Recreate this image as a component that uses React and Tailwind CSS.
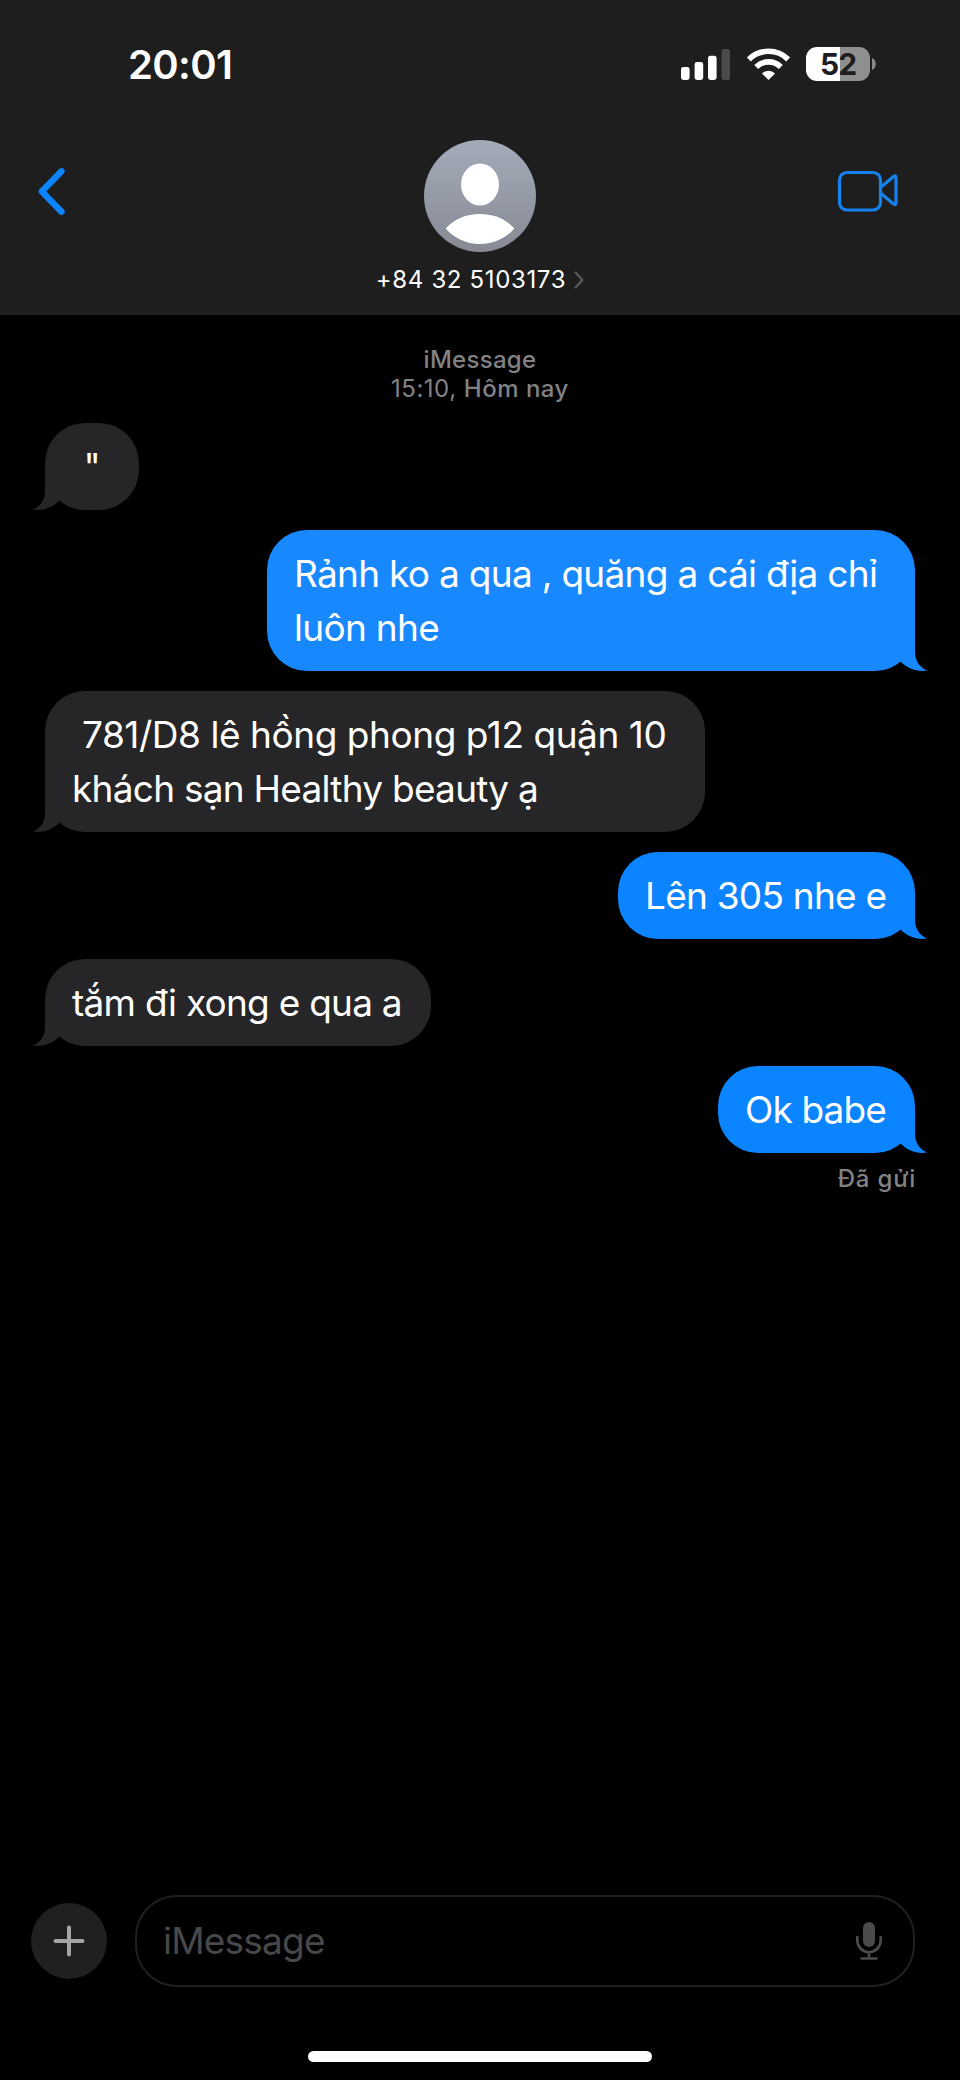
const messages = [
  { id: 1, lines: [{ text: '"' }], width: 'w-[94px]', center: true },
  {
    id: 2,
    mine: true,
    lines: [
      { text: 'Rảnh ko a qua , quăng a cái địa chỉ', tracking: 'tracking-[-0.7px]' },
      { text: 'luôn nhe', tracking: 'tracking-[-0.7px]' },
    ],
    width: 'w-[648px]',
    color: 'bg-[#1888ff]',
    fill: '#1888ff',
  },
  {
    id: 3,
    lines: [
      { text: ' 781/D8 lê hồng phong p12 quận 10', tracking: 'tracking-[-0.45px]' },
      { text: 'khách sạn Healthy beauty ạ', tracking: 'tracking-[-0.74px]' },
    ],
    width: 'w-[660px]',
  },
  { id: 4, mine: true, lines: [{ text: 'Lên 305 nhe e', tracking: 'tracking-[-0.75px]' }], width: 'w-[297px]', color: 'bg-[#0c84ff]', fill: '#0c84ff' },
  { id: 5, lines: [{ text: 'tắm đi xong e qua a', tracking: 'tracking-[-0.75px]' }], width: 'w-[386px]' },
  { id: 6, mine: true, lines: [{ text: 'Ok babe', tracking: 'tracking-[-0.85px]' }], width: 'w-[197px]', color: 'bg-[#0a84ff]', fill: '#0a84ff' },
];

const StatusBar = () => (
  <div className="flex h-[130px] items-start justify-between pl-[128px] pr-[84px]">
    <span className="mt-[41px] text-[40px] leading-[48px] font-semibold tracking-[-0.6px]">20:01</span>
    <div className="mt-[47px] flex h-[34px] items-center">
      <svg width="50" height="34" viewBox="0 0 50 34" fill="#fff">
        <rect x="1" y="20" width="8.6" height="13" rx="2.4" />
        <rect x="14.6" y="15" width="8.6" height="18" rx="2.4" />
        <rect x="28" y="8.8" width="8.6" height="24.2" rx="2.4" />
        <rect x="41.5" y="2" width="8.6" height="31" rx="2.4" fill="#4a4a4a" />
      </svg>
      <svg className="ml-[17px]" width="43" height="34" viewBox="0 0 43 34">
        <g fill="none" stroke="#fff" strokeWidth="5.6">
          <path d="M1.8 12.4a28 28 0 0 1 39.4 0" />
          <path d="M9.2 20a17.4 17.4 0 0 1 24.6 0" />
        </g>
        <path d="M21.5 33l-6.6-6.6a9.4 9.4 0 0 1 13.2 0z" fill="#fff" />
      </svg>
      {/* Battery level */}
      <div className="ml-4 flex h-[34px] w-[64px] items-center justify-center rounded-[11px] bg-linear-to-r from-white from-[53%] to-[#8f8f8f] to-[53%]">
        <span className="text-[30px] leading-[34px] font-bold tracking-[-1px] text-[#1e1e1e]">52</span>
      </div>
      <svg className="ml-[2px]" width="4" height="12" viewBox="0 0 4 12">
        <path d="M0 0c5 1.5 5 10.5 0 12z" fill="#8a8a8a" />
      </svg>
    </div>
  </div>
);

const ContactHeader = () => (
  <div className="grid grid-cols-3 items-start px-[36px]">
    <svg className="mt-[37px]" width="32" height="50" viewBox="0 0 32 50">
      <path d="M25.5 4.3L5.8 24.5l19.7 20.2" fill="none" stroke="#0a84ff" strokeWidth="6.4" strokeLinecap="round" strokeLinejoin="round" />
    </svg>
    <div className="flex flex-col items-center pt-[10px]">
      <svg width="112" height="112" viewBox="0 0 112 112">
        <defs>
          <linearGradient id="avatar" x1="0" y1="0" x2="0" y2="1">
            <stop offset="0" stopColor="#a5abb9" />
            <stop offset="1" stopColor="#858a94" />
          </linearGradient>
        </defs>
        <circle cx="56" cy="56" r="56" fill="url(#avatar)" />
        <ellipse cx="56" cy="44.5" rx="19" ry="21" fill="#fff" />
        <path d="M21.7 88.5C30 79 42 74 56 74s26 5 34.3 14.5C82 98 70 104 56 104s-26-6-34.3-15.5z" fill="#fff" />
      </svg>
      <div className="mt-[13px] flex items-center gap-[8px]">
        <span className="text-[24px] leading-[30px] tracking-[0.65px] whitespace-nowrap">+84 32 5103173</span>
        <svg width="10" height="18" viewBox="0 0 10 18">
          <path d="M1.5 1.5L8.5 9l-7 7.5" fill="none" stroke="#5c5c5e" strokeWidth="2" strokeLinecap="round" strokeLinejoin="round" />
        </svg>
      </div>
    </div>
    <svg className="mt-[38px] mr-[25px] justify-self-end" width="62" height="46" viewBox="0 0 62 46" fill="none" stroke="#1582ee" strokeWidth="3.2" strokeLinejoin="round">
      <rect x="2.5" y="4.5" width="41" height="37.5" rx="7.5" />
      <path d="M43.5 19.5L56.5 8.5Q59 7 59 9.5v25.5q0 2.5-2.5 1L43.5 25" />
    </svg>
  </div>
);

const Bubble = ({ lines, mine, width, color = 'bg-[#262628]', fill = '#262628', center }) => (
  <div className={`relative flex ${mine ? 'justify-end' : 'justify-start'}`}>
    {/* Tail, kept under the text */}
    <svg
      className={`absolute bottom-0 ${mine ? '-right-[12px]' : '-left-[12px] -scale-x-100'}`}
      width="42"
      height="44"
      viewBox="0 0 42 44"
    >
      <path d="M30 0v25c0 8 4 15 12 18.500-10 1.500-19-1.500-26-8.500L4 30V0z" fill={fill} />
    </svg>
    <div className={`relative ${width} ${color} rounded-[40px] px-[27px] pt-[17px] pb-4 ${center ? 'text-center' : ''}`}>
      {lines.map(({ text, tracking = '' }) => (
        <p key={text} className={`text-[37px] leading-[54px] whitespace-pre ${tracking}`}>{text}</p>
      ))}
    </div>
  </div>
);

const InputBar = () => (
  <div className="flex items-center gap-[28px] pl-[31px] pr-[45px]">
    <div className="flex size-[76px] shrink-0 items-center justify-center rounded-full bg-[#202022]">
      <svg width="32" height="32" viewBox="0 0 32 32">
        <path d="M16 2.5v27M2.500 16h27" stroke="#a5a5a7" strokeWidth="4" strokeLinecap="round" />
      </svg>
    </div>
    <div className="flex h-[92px] flex-1 items-center justify-between rounded-[42px] border-2 border-[#202021] pl-[26px] pr-[30px]">
      <span className="text-[37px] leading-[54px] tracking-[-0.8px] text-[#48484a]">iMessage</span>
      <svg width="28" height="40" viewBox="0 0 28 40" fill="none" stroke="#4b4b4d" strokeWidth="2.6" strokeLinecap="round">
        <rect x="8" y="1" width="12" height="25" rx="6" fill="#4b4b4d" stroke="none" />
        <path d="M2.3 16v3.5a11.7 11.7 0 0 0 23.4 0V16M14 31.500v6M6.500 37.500h15" />
      </svg>
    </div>
  </div>
);

export default function App() {
  return (
    <div className="flex h-[2080px] w-[960px] flex-col overflow-hidden bg-black font-['Inter',sans-serif] text-white">
      <header className="h-[315px] shrink-0 bg-[#1e1e1e]">
        <StatusBar />
        <ContactHeader />
      </header>

      <main className="flex-1 px-[45px] pt-[30px]">
        <div className="text-center text-[24px] leading-[29px] text-[#828285]">
          <p className="font-medium tracking-[0.3px]">iMessage</p>
          <p className="tracking-[0.5px]">15:10, <span className="font-medium">Hôm nay</span></p>
        </div>
        <div className="mt-5 flex flex-col gap-5">
          {messages.map((message) => (
            <Bubble key={message.id} {...message} />
          ))}
        </div>
        <p className="mt-[11px] -mr-[1px] text-right text-[24px] leading-[30px] font-medium tracking-[0.8px] text-[#828285]">Đã gửi</p>
      </main>

      <footer className="h-[185px] shrink-0">
        <InputBar />
        <div className="mx-auto mt-[64px] h-[11px] w-[344px] rounded-full bg-white" />
      </footer>
    </div>
  );
}
